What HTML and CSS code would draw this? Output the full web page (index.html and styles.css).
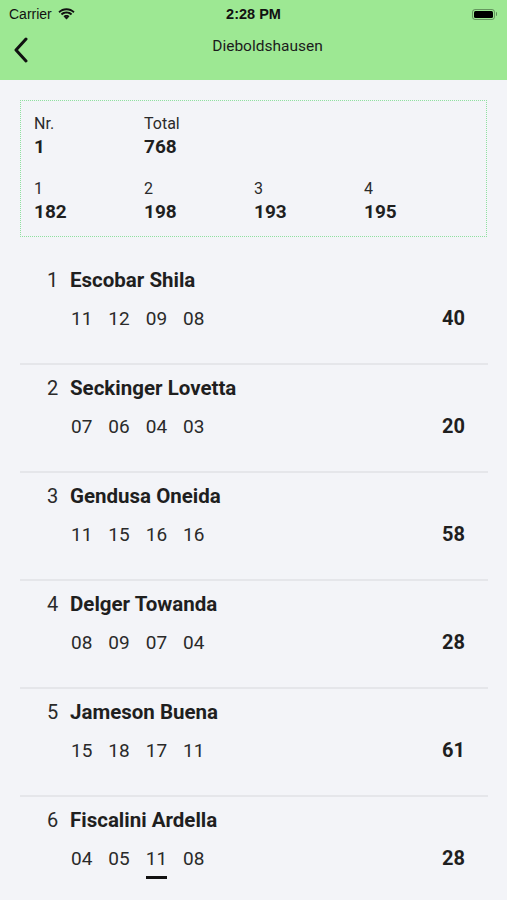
FILE: index.html
```html
<!DOCTYPE html>
<html>
<head>
<meta charset="utf-8">
<link rel="stylesheet" href="styles.css">
</head>
<body>
<header class="top">
  <div class="status">
    <div class="status-left">
      <span class="carrier">Carrier</span>
      <svg class="wifi" width="17" height="12" viewBox="0 0 17 12">
        <path d="M8.5 2.2c2.6 0 5 1 6.8 2.7l1.3-1.4C14.4 1.4 11.6.2 8.5.2S2.6 1.4.4 3.5l1.3 1.4C3.5 3.2 5.9 2.2 8.5 2.2z" fill="#111"/>
        <path d="M8.5 5.5c1.7 0 3.2.6 4.4 1.7l1.3-1.4C12.7 4.4 10.7 3.6 8.5 3.6S4.3 4.4 2.8 5.8l1.3 1.4C5.3 6.1 6.8 5.5 8.5 5.5z" fill="#111"/>
        <path d="M8.5 8.7c.8 0 1.5.3 2 .8L8.5 11.6 6.5 9.5c.5-.5 1.2-.8 2-.8z" fill="#111"/>
        <path d="M8.5 6.9c1.2 0 2.3.5 3.1 1.2L10.3 9.5c-.5-.4-1.1-.7-1.8-.7s-1.3.3-1.8.7L5.4 8.1c.8-.7 1.9-1.2 3.1-1.2z" fill="#111"/>
      </svg>
    </div>
    <span class="time">2:28 PM</span>
    <div class="status-right">
      <div class="battery"><div class="battery-fill"></div></div>
      <div class="battery-cap"></div>
    </div>
  </div>
  <nav class="navbar">
    <svg class="back" width="16" height="26" viewBox="0 0 16 26">
      <path d="M13 2 L3 13 L13 24" fill="none" stroke="#111" stroke-width="3" stroke-linecap="round" stroke-linejoin="round"/>
    </svg>
    <span class="title">Dieboldshausen</span>
  </nav>
</header>

<main class="content">
  <section class="summary">
    <div class="grid">
      <div class="cell"><div class="label">Nr.</div><div class="value">1</div></div>
      <div class="cell"><div class="label">Total</div><div class="value">768</div></div>
      <div class="cell"></div>
      <div class="cell"></div>
    </div>
    <div class="grid second">
      <div class="cell"><div class="label">1</div><div class="value">182</div></div>
      <div class="cell"><div class="label">2</div><div class="value">198</div></div>
      <div class="cell"><div class="label">3</div><div class="value">193</div></div>
      <div class="cell"><div class="label">4</div><div class="value">195</div></div>
    </div>
  </section>

  <ul class="list">
    <li class="row">
      <div class="name-line"><span class="pos">1</span><span class="name">Escobar Shila</span></div>
      <div class="score-line"><div class="scores"><span>11</span><span>12</span><span>09</span><span>08</span></div><span class="total">40</span></div>
    </li>
    <li class="row">
      <div class="name-line"><span class="pos">2</span><span class="name">Seckinger Lovetta</span></div>
      <div class="score-line"><div class="scores"><span>07</span><span>06</span><span>04</span><span>03</span></div><span class="total">20</span></div>
    </li>
    <li class="row">
      <div class="name-line"><span class="pos">3</span><span class="name">Gendusa Oneida</span></div>
      <div class="score-line"><div class="scores"><span>11</span><span>15</span><span>16</span><span>16</span></div><span class="total">58</span></div>
    </li>
    <li class="row">
      <div class="name-line"><span class="pos">4</span><span class="name">Delger Towanda</span></div>
      <div class="score-line"><div class="scores"><span>08</span><span>09</span><span>07</span><span>04</span></div><span class="total">28</span></div>
    </li>
    <li class="row">
      <div class="name-line"><span class="pos">5</span><span class="name">Jameson Buena</span></div>
      <div class="score-line"><div class="scores"><span>15</span><span>18</span><span>17</span><span>11</span></div><span class="total">61</span></div>
    </li>
    <li class="row">
      <div class="name-line"><span class="pos">6</span><span class="name">Fiscalini Ardella</span></div>
      <div class="score-line"><div class="scores"><span>04</span><span>05</span><span class="current">11</span><span>08</span></div><span class="total">28</span></div>
    </li>
  </ul>
</main>
</body>
</html>
```

FILE: styles.css
```css
* { box-sizing: border-box; }
html, body { margin: 0; padding: 0; }
body {
  background: #f3f4f8;
  font-family: Roboto, "Noto Sans", sans-serif;
  color: #1f1f1f;
  width: 507px;
  height: 900px;
  overflow: hidden;
}
.top {
  background: #9de893;
  height: 80px;
}
.status {
  height: 28px;
  display: flex;
  align-items: center;
  justify-content: space-between;
  padding: 0 10px 0 9px;
  position: relative;
}
.status-left { display: flex; align-items: center; gap: 6px; }
.carrier {
  font-family: "Liberation Sans", Arial, sans-serif;
  font-size: 14px;
  color: #111;
}
.wifi { margin-top: -1px; }
.time {
  position: absolute;
  left: 0; right: 0;
  text-align: center;
  font-family: "Liberation Sans", Arial, sans-serif;
  font-weight: bold;
  font-size: 14.5px;
  color: #111;
}
.status-right { display: flex; align-items: center; }
.battery {
  width: 23px; height: 11px;
  border: 1px solid rgba(0,0,0,0.35);
  border-radius: 3px;
  padding: 1px;
}
.battery-fill { width: 100%; height: 100%; background: #000; border-radius: 1.5px; }
.battery-cap { width: 1.5px; height: 4px; background: rgba(0,0,0,0.4); border-radius: 0 1px 1px 0; margin-left: 1px; }
.navbar {
  height: 52px;
  display: flex;
  align-items: center;
  position: relative;
  padding-left: 13px;
}
.back { margin-top: -8px; }
.title {
  position: absolute;
  left: 28px; right: 0;
  top: 9px;
  text-align: center;
  font-size: 15.5px;
  color: #1b1b1b;
}
.content { padding: 20px 20px 0 20px; }
.summary {
  border: 1px dotted #8fe0a0;
  padding: 13px 12px 13px 13px;
  width: 467px;
}
.grid {
  display: grid;
  grid-template-columns: repeat(4, 110px);
}
.grid.second { margin-top: 21px; }
.label { font-size: 16px; line-height: 20px; color: #2a2a2a; }
.value { font-size: 19px; line-height: 22px; font-weight: bold; color: #1f1f1f; margin-top: 2px; }
.list { list-style: none; margin: 20px 0 0 0; padding: 0; width: 468px; }
.row {
  padding: 10px 23px 32px 27px;
  border-bottom: 2px solid #e5e6ea;
}
.name-line { display: flex; align-items: center; height: 26px; }
.pos { font-size: 20px; color: #2a2a2a; width: 23px; }
.name { font-size: 20.5px; font-weight: bold; color: #1f1f1f; }
.score-line {
  margin-top: 12px;
  height: 26px;
  display: flex;
  align-items: center;
  justify-content: space-between;
  padding-left: 24px;
}
.scores { display: flex; gap: 16px; }
.scores span { font-size: 19px; color: #2a2a2a; position: relative; }
.scores .current::after {
  content: "";
  position: absolute;
  left: 0; right: 0;
  bottom: -9px;
  height: 3px;
  background: #111;
}
.total { font-size: 20px; font-weight: bold; color: #1f1f1f; }
```
